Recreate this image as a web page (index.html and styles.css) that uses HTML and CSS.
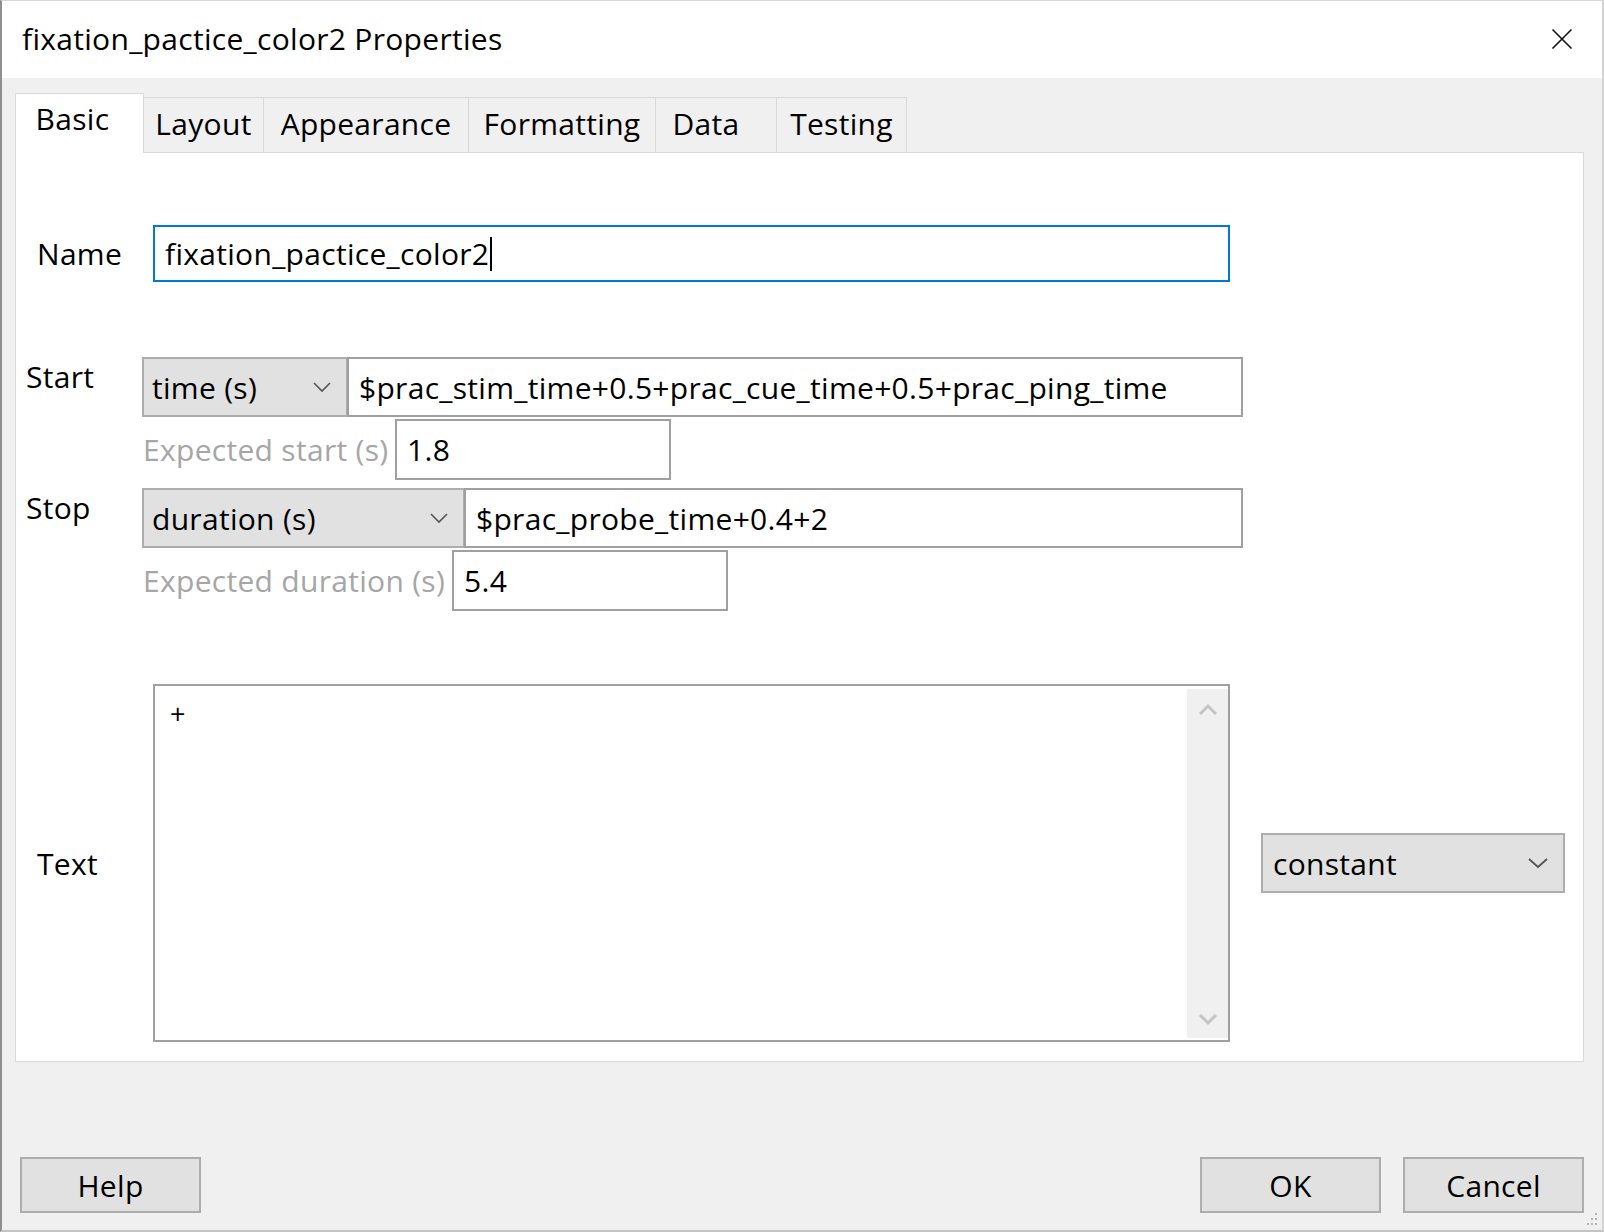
FILE: index.html
```html
<!DOCTYPE html>
<html lang="en">
<head>
    <meta charset="UTF-8">
    <title>fixation_pactice_color2 Properties</title>
    <link rel="stylesheet" href="styles.css">
</head>
<body>

<div class="window">
    <div class="titlebar">
        <span class="title">fixation_pactice_color2 Properties</span>
        <span class="close">
            <svg width="22" height="22" viewBox="0 0 22 22"><path d="M1.5 1.5 L20.5 20.5 M20.5 1.5 L1.5 20.5" stroke="#111" stroke-width="1.6" fill="none"/></svg>
        </span>
    </div>

    <div class="tabs">
        <div class="tab tab-basic active">Basic</div>
        <div class="tab tab-layout">Layout</div>
        <div class="tab tab-appearance">Appearance</div>
        <div class="tab tab-formatting">Formatting</div>
        <div class="tab tab-data">Data</div>
        <div class="tab tab-testing">Testing</div>
    </div>

    <div class="pane">
        <div class="row row-name">
            <div class="label">Name</div>
            <div class="field field-name">fixation_pactice_color2<span class="caret"></span></div>
        </div>

        <div class="timing">
            <div class="row row-time">
                <div class="label label-time">Start</div>
                <div class="combo combo-start">
                    <span>time (s)</span>
                    <svg class="chevron" width="20" height="12" viewBox="0 0 20 12"><path d="M2 2 L10 10 L18 2" stroke="#555" stroke-width="1.6" fill="none"/></svg>
                </div>
                <div class="field field-expr field-start">$prac_stim_time+0.5+prac_cue_time+0.5+prac_ping_time</div>
            </div>
            <div class="row row-expected">
                <div class="hint hint-start">Expected start (s)</div>
                <div class="field field-small">1.8</div>
            </div>

            <div class="row row-time row-stop">
                <div class="label label-time">Stop</div>
                <div class="combo combo-stop">
                    <span>duration (s)</span>
                    <svg class="chevron" width="20" height="12" viewBox="0 0 20 12"><path d="M2 2 L10 10 L18 2" stroke="#555" stroke-width="1.6" fill="none"/></svg>
                </div>
                <div class="field field-expr field-stop">$prac_probe_time+0.4+2</div>
            </div>
            <div class="row row-expected">
                <div class="hint hint-duration">Expected duration (s)</div>
                <div class="field field-small">5.4</div>
            </div>
        </div>

        <div class="row row-text">
            <div class="label">Text</div>
            <div class="textarea">
                <div class="textarea-body">+</div>
                <div class="scrollbar">
                    <svg width="22" height="14" viewBox="0 0 22 14"><path d="M3 11 L11 3 L19 11" stroke="#c4c4c4" stroke-width="3" fill="none"/></svg>
                    <svg width="22" height="14" viewBox="0 0 22 14"><path d="M3 3 L11 11 L19 3" stroke="#c4c4c4" stroke-width="3" fill="none"/></svg>
                </div>
            </div>
            <div class="combo combo-mode">
                <span>constant</span>
                <svg class="chevron" width="22" height="14" viewBox="0 0 22 14"><path d="M2 3 L11 11 L20 3" stroke="#555" stroke-width="1.8" fill="none"/></svg>
            </div>
        </div>
    </div>

    <div class="footer">
        <button class="button">Help</button>
        <div class="footer-right">
            <button class="button">OK</button>
            <button class="button">Cancel</button>
        </div>
    </div>

    <svg class="grip" width="16" height="16" viewBox="0 0 16 16">
        <rect x="12" y="2" width="2" height="2" fill="#b5b5b5"/>
        <rect x="8" y="7" width="2" height="2" fill="#b5b5b5"/>
        <rect x="12" y="7" width="2" height="2" fill="#b5b5b5"/>
        <rect x="4" y="12" width="2" height="2" fill="#b5b5b5"/>
        <rect x="8" y="12" width="2" height="2" fill="#b5b5b5"/>
        <rect x="12" y="12" width="2" height="2" fill="#b5b5b5"/>
    </svg>
</div>

</body>
</html>
```

FILE: styles.css
```css
* {
    box-sizing: border-box;
}

body {
    margin: 0;
    font-family: 'Open Sans', 'Noto Sans', sans-serif;
    font-size: 30px;
    letter-spacing: 0.3px;
    color: #000;
    background-color: #f0f0f0;
}

.window {
    position: relative;
    width: 1604px;
    height: 1232px;
    background-color: #f0f0f0;
    border-left: 2px solid #8f8f8f;
    border-right: 2px solid #d2d2d2;
    border-top: 1px solid #d6d6d6;
    border-bottom: 2px solid #c4c4c4;
    overflow: hidden;
}

.titlebar {
    height: 77px;
    background-color: #fff;
    display: flex;
    align-items: center;
    justify-content: space-between;
    padding: 0 29px 2px 20px;
}

.title {
    font-size: 30px;
}

.close {
    display: flex;
}

/* tabs */

.tabs {
    display: flex;
    align-items: flex-end;
    height: 74px;
    padding-left: 13px;
}

.tab {
    height: 55px;
    line-height: 52px;
    text-align: center;
    background-color: #f0f0f0;
    border: 1px solid #d9d9d9;
    border-bottom: none;
    margin-left: -1px;
}

.tab.active {
    position: relative;
    z-index: 1;
    height: 60px;
    line-height: 50px;
    margin-left: 0;
    margin-bottom: -1px;
    padding-right: 14px;
    background-color: #fff;
}

.tab-basic { width: 129px; }
.tab-layout { width: 121px; }
.tab-appearance { width: 206px; }
.tab-formatting { width: 188px; }
.tab-data { width: 122px; padding-right: 20px; }
.tab-testing { width: 131px; }

/* pane */

.pane {
    margin: 0 18px 0 13px;
    height: 910px;
    background-color: #fff;
    border: 1px solid #d9d9d9;
}

.row {
    display: flex;
    align-items: center;
}

.label {
    width: 116px;
    flex-shrink: 0;
}

.row-name {
    margin-top: 72px;
    padding-left: 21px;
}

.field {
    height: 60px;
    padding-left: 10px;
    display: flex;
    align-items: center;
    background-color: #fff;
    border: 2px solid #a0a0a0;
    white-space: nowrap;
}

.field-name {
    width: 1077px;
    height: 57px;
    border-color: #0078d7;
}

.caret {
    display: inline-block;
    width: 2px;
    height: 34px;
    margin-left: 1px;
    background-color: #000;
}

.timing {
    margin-top: 75px;
    padding-left: 10px;
}

.row-time {
    align-items: flex-start;
}

.label-time {
    padding-top: 3px;
    line-height: 34px;
}

.row-stop {
    margin-top: 8px;
}

.combo {
    height: 60px;
    display: flex;
    align-items: center;
    justify-content: space-between;
    padding: 0 14px 0 8px;
    background-color: #e1e1e1;
    border: 2px solid #adadad;
}

.combo-start { width: 206px; }
.combo-stop { width: 323px; }

.field-expr {
    margin-left: -1px;
}

.field-start { width: 896px; }
.field-stop { width: 779px; }

.row-expected {
    margin-top: 2px;
    padding-left: 117px;
}

.hint {
    color: #a6a6a6;
    flex-shrink: 0;
    white-space: nowrap;
}

.hint-start { width: 252px; }
.hint-duration { width: 309px; }

.field-small {
    width: 276px;
    height: 61px;
}

/* text row */

.row-text {
    margin-top: 73px;
    padding-left: 21px;
}

.textarea {
    width: 1077px;
    height: 358px;
    display: flex;
    border: 2px solid #a0a0a0;
    background-color: #fff;
}

.textarea-body {
    flex: 1;
    padding: 2px 0 0 15px;
    line-height: 52px;
    font-size: 27px;
}

.scrollbar {
    width: 41px;
    margin: 3px 0 2px;
    background-color: #f0f0f0;
    display: flex;
    flex-direction: column;
    justify-content: space-between;
    align-items: center;
    padding: 14px 0 12px;
}

.combo-mode {
    width: 304px;
    margin-left: 31px;
    padding-left: 10px;
}

/* footer */

.footer {
    display: flex;
    justify-content: space-between;
    margin-top: 95px;
    padding: 0 18px;
}

.footer-right {
    display: flex;
    gap: 22px;
}

.button {
    width: 181px;
    height: 56px;
    font-family: inherit;
    font-size: 30px;
    letter-spacing: 0.3px;
    color: #000;
    background-color: #e1e1e1;
    border: 2px solid #adadad;
    padding: 0;
}

.grip {
    position: absolute;
    right: 3px;
    bottom: 3px;
}
```
